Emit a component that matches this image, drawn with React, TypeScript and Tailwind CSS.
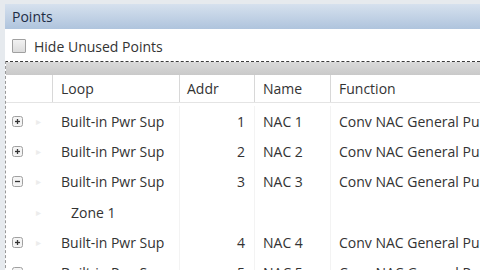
import React from 'react';

interface PointRow {
  loop: string;
  addr?: string;
  name?: string;
  fn?: string;
  expander?: 'plus' | 'minus';
  child?: boolean;
}

const rows: PointRow[] = [
  { loop: 'Built-in Pwr Sup', addr: '1', name: 'NAC 1', fn: 'Conv NAC General Purpose', expander: 'plus' },
  { loop: 'Built-in Pwr Sup', addr: '2', name: 'NAC 2', fn: 'Conv NAC General Purpose', expander: 'plus' },
  { loop: 'Built-in Pwr Sup', addr: '3', name: 'NAC 3', fn: 'Conv NAC General Purpose', expander: 'minus' },
  { loop: 'Zone 1', child: true },
  { loop: 'Built-in Pwr Sup', addr: '4', name: 'NAC 4', fn: 'Conv NAC General Purpose', expander: 'plus' },
  { loop: 'Built-in Pwr Sup', addr: '5', name: 'NAC 5', fn: 'Conv NAC General Purpose', expander: 'plus' },
];

const Expander: React.FC<{ kind: 'plus' | 'minus' }> = ({ kind }) => (
  <svg width="11" height="11" viewBox="0 0 11 11">
    <rect x="0.5" y="0.5" width="10" height="10" rx="2" fill="#f4f4f4" stroke="#a0a0a0" />
    <path d="M3 5.5h5" stroke="#333" strokeWidth="1.3" />
    {kind === 'plus' && <path d="M5.5 3v5" stroke="#333" strokeWidth="1.3" />}
  </svg>
);

const App: React.FC = () => {
  return (
    <div
      className="w-[480px] h-[270px] overflow-hidden bg-[#e6eaee] pt-[4px] pl-[5px] text-[14px] text-[#333]"
      style={{ fontFamily: '"Open Sans", "Noto Sans", sans-serif' }}
    >
      <div className="h-full flex flex-col bg-white">
        {/* title */}
        <div className="h-[25px] shrink-0 flex items-center pl-[7px] bg-gradient-to-b from-[#d6e1ee] to-[#afc4dd] text-[#1d2c45]">
          Points
        </div>

        {/* filter */}
        <div className="h-[32px] shrink-0 flex items-center pl-[7px] pt-[2px] gap-[8px] bg-white">
          <div className="w-[14px] h-[14px] border border-[#a0a0a0] bg-gradient-to-b from-[#f2f2f2] to-[#dcdcdc] rounded-[1px]" />
          <span>Hide Unused Points</span>
        </div>

        {/* grid */}
        <div className="flex-1 flex flex-col border-t border-dashed border-[#3a3a3a] border-l border-l-[#999] border-l-dotted">
          <div className="h-[13px] shrink-0 bg-gradient-to-b from-[#dadada] to-[#c9c9c9]" />

          {/* header */}
          <div className="h-[28px] shrink-0 flex items-center border-b border-[#e4e4e4] bg-white">
            <div className="w-[47px] h-full border-r border-[#d8d8d8]" />
            <div className="w-[127px] h-full flex items-center pl-[8px] border-r border-[#d8d8d8]">Loop</div>
            <div className="w-[75px] h-full flex items-center pl-[7px] border-r border-[#d8d8d8]">Addr</div>
            <div className="w-[76px] h-full flex items-center pl-[8px] border-r border-[#d8d8d8]">Name</div>
            <div className="flex-1 h-full flex items-center pl-[8px]">Function</div>
          </div>

          <div className="h-[3px] shrink-0" />

          {rows.map((r, i) => (
            <div key={i} className="h-[30.3px] shrink-0 flex items-center whitespace-nowrap">
              <div className="w-[47px] h-full flex items-center pl-[6px] gap-[13px]">
                <div className="w-[11px] h-[11px]">{r.expander && <Expander kind={r.expander} />}</div>
                <span className="text-[#ececec] text-[10px]">▸</span>
              </div>
              <div className={`w-[127px] h-full flex items-center border-r border-[#f3f3f3] ${r.child ? 'pl-[18px]' : 'pl-[8px]'}`}>
                {r.loop}
              </div>
              <div className="w-[75px] h-full flex items-center justify-end pr-[9px] border-r border-[#f3f3f3]">{r.addr}</div>
              <div className="w-[76px] h-full flex items-center pl-[8px] border-r border-[#f3f3f3]">{r.name}</div>
              <div className="flex-1 h-full flex items-center pl-[8px] overflow-hidden">{r.fn}</div>
            </div>
          ))}
        </div>
      </div>
    </div>
  );
};

export default App;
